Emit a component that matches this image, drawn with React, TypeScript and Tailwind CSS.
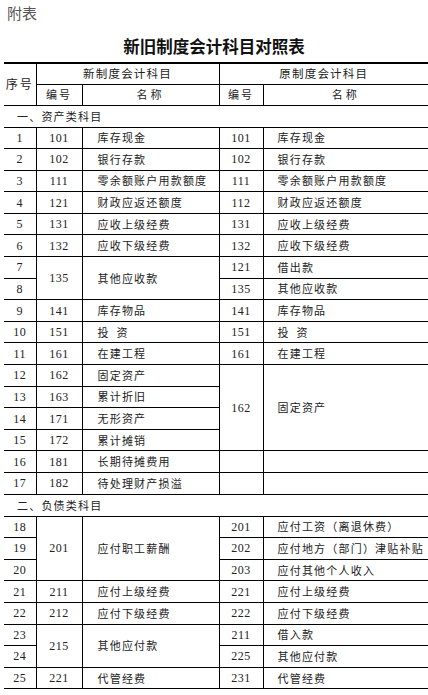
type Cell = { code: string; name: string; span?: number } | null;
type Row = { no: number; left: Cell; right: Cell; emptyRight?: boolean };

const assets: Row[] = [
  { no: 1, left: { code: "101", name: "库存现金" }, right: { code: "101", name: "库存现金" } },
  { no: 2, left: { code: "102", name: "银行存款" }, right: { code: "102", name: "银行存款" } },
  { no: 3, left: { code: "111", name: "零余额账户用款额度" }, right: { code: "111", name: "零余额账户用款额度" } },
  { no: 4, left: { code: "121", name: "财政应返还额度" }, right: { code: "112", name: "财政应返还额度" } },
  { no: 5, left: { code: "131", name: "应收上级经费" }, right: { code: "131", name: "应收上级经费" } },
  { no: 6, left: { code: "132", name: "应收下级经费" }, right: { code: "132", name: "应收下级经费" } },
  { no: 7, left: { code: "135", name: "其他应收款", span: 2 }, right: { code: "121", name: "借出款" } },
  { no: 8, left: null, right: { code: "135", name: "其他应收款" } },
  { no: 9, left: { code: "141", name: "库存物品" }, right: { code: "141", name: "库存物品" } },
  { no: 10, left: { code: "151", name: "投\u2002资" }, right: { code: "151", name: "投\u2002资" } },
  { no: 11, left: { code: "161", name: "在建工程" }, right: { code: "161", name: "在建工程" } },
  { no: 12, left: { code: "162", name: "固定资产" }, right: { code: "162", name: "固定资产", span: 4 } },
  { no: 13, left: { code: "163", name: "累计折旧" }, right: null },
  { no: 14, left: { code: "171", name: "无形资产" }, right: null },
  { no: 15, left: { code: "172", name: "累计摊销" }, right: null },
  { no: 16, left: { code: "181", name: "长期待摊费用" }, right: null, emptyRight: true },
  { no: 17, left: { code: "182", name: "待处理财产损溢" }, right: null, emptyRight: true },
];

const debts: Row[] = [
  { no: 18, left: { code: "201", name: "应付职工薪酬", span: 3 }, right: { code: "201", name: "应付工资（离退休费）" } },
  { no: 19, left: null, right: { code: "202", name: "应付地方（部门）津贴补贴" } },
  { no: 20, left: null, right: { code: "203", name: "应付其他个人收入" } },
  { no: 21, left: { code: "211", name: "应付上级经费" }, right: { code: "221", name: "应付上级经费" } },
  { no: 22, left: { code: "212", name: "应付下级经费" }, right: { code: "222", name: "应付下级经费" } },
  { no: 23, left: { code: "215", name: "其他应付款", span: 2 }, right: { code: "211", name: "借入款" } },
  { no: 24, left: null, right: { code: "225", name: "其他应付款" } },
  { no: 25, left: { code: "221", name: "代管经费" }, right: { code: "231", name: "代管经费" } },
];

const num = "font-['Liberation_Serif',serif] text-[12px] tracking-[0.5px] text-center";
const line = "border-y border-black";
const vline = "border-l border-black";

function Section({ title }: { title: string }) {
  return (
    <tr className="h-[22px]">
      <td colSpan={5} className={`${line} pl-[13px] align-middle`}>
        {title}
      </td>
    </tr>
  );
}

function DataRow({ row }: { row: Row }) {
  return (
    <tr className="h-[21.6px]">
      <td className={`${line} ${num}`}>{row.no}</td>
      {row.left && (
        <>
          <td rowSpan={row.left.span} className={`${line} ${vline} ${num}`}>
            {row.left.code}
          </td>
          <td rowSpan={row.left.span} className={`${line} ${vline} pl-[15px]`}>
            {row.left.name}
          </td>
        </>
      )}
      {row.right && (
        <>
          <td rowSpan={row.right.span} className={`${line} ${vline} ${num}`}>
            {row.right.code}
          </td>
          <td rowSpan={row.right.span} className={`${line} ${vline} pl-[14px]`}>
            {row.right.name}
          </td>
        </>
      )}
      {row.emptyRight && (
        <>
          <td className={`${line} ${vline}`}></td>
          <td className={`${line} ${vline}`}></td>
        </>
      )}
    </tr>
  );
}

export default function App() {
  return (
    <div className="w-[428px] bg-white font-['Noto_Sans_CJK_SC',sans-serif] text-[#222]">
      <div className="pt-[3px] pl-[7px] text-[15px] leading-[20px] text-[#555]">附表</div>
      <h1 className="mt-[12px] text-center text-[16.5px] font-bold leading-[22px] text-[#111]">
        新旧制度会计科目对照表
      </h1>

      <table className="ml-[4px] mt-[5px] w-[424px] table-fixed border-collapse text-[11px] tracking-[1.2px] leading-none">
        <colgroup>
          <col className="w-[32px]" />
          <col className="w-[46px]" />
          <col className="w-[137px]" />
          <col className="w-[44px]" />
          <col className="w-[165px]" />
        </colgroup>
        <thead>
          <tr className="h-[21px]">
            <td rowSpan={2} className="border-t-2 border-b border-black text-center text-[12px] tracking-[2px]">
              序号
            </td>
            <td colSpan={2} className={`border-t-2 border-b border-black ${vline} text-center text-[11.5px]`}>
              新制度会计科目
            </td>
            <td colSpan={2} className={`border-t-2 border-b border-black ${vline} text-center text-[11.5px]`}>
              原制度会计科目
            </td>
          </tr>
          <tr className="h-[21px]">
            <td className={`${line} ${vline} text-center tracking-[2px]`}>编号</td>
            <td className={`${line} ${vline} text-center tracking-[3px]`}>名称</td>
            <td className={`${line} ${vline} text-center tracking-[2px]`}>编号</td>
            <td className={`${line} ${vline} text-center tracking-[3px]`}>名称</td>
          </tr>
        </thead>
        <tbody>
          <Section title="一、资产类科目" />
          {assets.map((r) => (
            <DataRow key={r.no} row={r} />
          ))}
          <Section title="二、负债类科目" />
          {debts.map((r) => (
            <DataRow key={r.no} row={r} />
          ))}
        </tbody>
      </table>
    </div>
  );
}
